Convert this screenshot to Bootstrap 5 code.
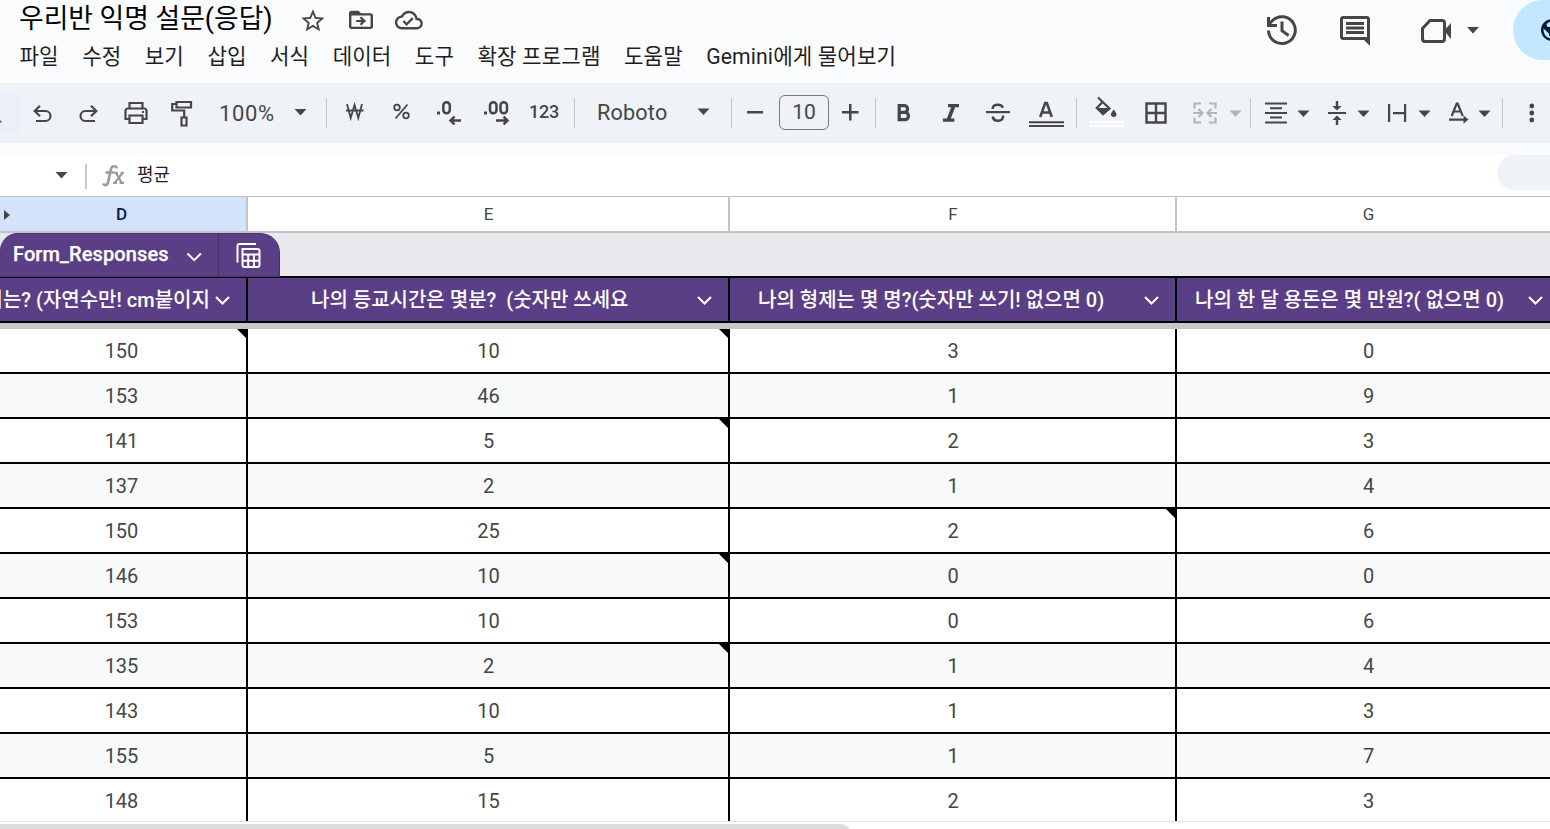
<!DOCTYPE html>
<html lang="ko">
<head>
<meta charset="utf-8">
<title>우리반 익명 설문(응답)</title>
<link rel="stylesheet" href="https://cdn.jsdelivr.net/npm/bootstrap@5.3.0/dist/css/bootstrap.min.css">
<script src="https://cdn.jsdelivr.net/npm/bootstrap@5.3.0/dist/js/bootstrap.bundle.min.js"></script>
<style>
  body{font-family:Roboto,"Noto Sans CJK KR",sans-serif;background:#f9fbfd;color:#1f1f1f;height:829px;line-height:1}
  svg{display:block;flex:none;fill:#444746}
  .ln{fill:none;stroke:#444746;stroke-width:2.2}
  .app-head{height:83px;padding-left:19px}
  .doc-title{font-size:26.8px;line-height:38px;color:#000;width:275px}
  .title-row{height:38px}
  .menus{gap:23.4px;font-size:21.2px;line-height:38px;letter-spacing:.12px;height:38px;padding-left:.5px}
  .head-tools{height:60px}
  .share-pill{width:37px;height:60px;background:#c2e7ff;border-radius:30px 0 0 30px}
  .toolbar{height:60px;background:#eff2f7;color:#444746}
  .search-chip{width:20px;height:40px;background:#ebeffa}
  .vline{width:1px;height:30px;background:#c4c7c5}
  .t-zoom{width:82px;padding-left:13px;padding-top:2px;font-size:22px;letter-spacing:.6px}
  .t-123{width:47px;padding-left:2px;padding-bottom:2px;font-size:18px;font-weight:500;letter-spacing:-.2px}
  .t-font{width:95px;padding-left:22px;font-size:21.6px;letter-spacing:.2px}
  .t-size{width:50px;height:35px;border:1px solid #747775;border-radius:6px;font-size:21px;margin-top:-2px}
  .formula{height:42px;margin-top:12px;background:#fff;border-bottom:1px solid #c0c0c0}
  .formula-text{font-size:18px;padding-left:11px;padding-bottom:1px}
  .fx-sep{width:2px;height:25px;background:#c7c7c7;margin-top:2px}
  .side-pill{width:53px;height:35px;background:#eff2f7;border-radius:18px 0 0 18px}
  .cols{display:grid;grid-template-columns:248px 482px 447px 373px}
  .cols>div{display:flex;align-items:center;justify-content:center;position:relative;overflow:hidden;white-space:nowrap}
  .cols>div:not(:last-child){border-right:2px solid #000}
  .cols>div:first-child{padding-right:3px}
  .cols>div:nth-child(2),.cols>div:nth-child(3){padding-left:1px}
  .cols>div:last-child{padding-left:10px}
  .letters{height:36px;background:#fff;border-bottom:2px solid #c4c4c4;font-size:17px;color:#444746}
  .letters>div:not(:last-child){border-color:#c4c4c4}
  .letters .picked{background:#d3e3fd;color:#041e49;font-weight:500}
  .hidden-mark{position:absolute;left:4px;top:12px}
  .band{height:43px;background:#e8e9ed}
  .tab-box{width:280px;height:44px;background:#5b3f86;border:1px solid #4a3070;border-left:0;border-radius:18px 20px 0 0;color:#fff;position:relative;z-index:1}
  .tab-name{font-size:20px;font-weight:500;-webkit-text-stroke:.25px #fff;padding-left:13px;padding-bottom:2px;width:180px;letter-spacing:.1px}
  .tab-div{width:1px;height:43px;background:#4a3070}
  .heads{height:47px;background:#5b3f86;border-top:2px solid #000;border-bottom:2px solid #000;color:#fff;font-size:20px;font-weight:500}
  .heads>div:nth-child(n){justify-content:flex-start;padding:0}
  .chev{position:absolute;top:17px;right:15px}
  .wht{fill:none;stroke:#fff;stroke-width:2}
  .frozen{height:6px;background:#c7c7c7}
  .data-row{height:45px;border-bottom:2px solid #000;background:#fff;font-size:20px;color:#444746}
  .data-row:nth-child(even){background:#f8f9fb}
  .data-row:last-child{height:42px;border-bottom:0}
  .data-row:last-child>div{padding-top:2px}
  .noted::after{content:"";position:absolute;right:0;top:0;border-top:9px solid #000;border-left:9px solid transparent}
  .scroller{height:8px;border-top:1px solid #e1e1e1;background:#fff;padding-top:2px}
  .thumb{width:851px;height:12px;background:#dadce0;border-radius:0 10px 0 0}
  .h-d span{margin-left:-15.5px}.h-e span{margin-left:63px}.h-f span{margin-left:28px}.h-g span{margin-left:18px}
</style>
</head>
<body class="overflow-hidden">
<header class="app-head d-flex justify-content-between">
  <div>
    <div class="title-row d-flex">
      <div class="doc-title text-nowrap">우리반 익명 설문(응답)</div>
      <svg width="45" height="38" viewBox="294 0 45 38"><path transform="translate(299 7) scale(1.16)" d="M22 9.24l-7.19-.62L12 2 9.19 8.63 2 9.24l5.46 4.73L5.82 21 12 17.27 18.18 21l-1.63-7.03L22 9.24zM12 15.4l-3.76 2.27 1-4.28-3.32-2.88 4.38-.38L12 6.1l1.71 4.04 4.38.38-3.32 2.88 1 4.28L12 15.4z"/></svg>
      <svg width="45" height="38" viewBox="339 0 45 38"><path transform="translate(346.6 6.3) scale(1.2 1.14)" d="M20 6h-8l-2-2H4c-1.1 0-2 .9-2 2v12c0 1.1.9 2 2 2h16c1.1 0 2-.9 2-2V8c0-1.1-.9-2-2-2zm0 12H4V8h16v10zM12.2 16.8l4-3.9-4-3.9-1.3 1.3 1.6 1.7H8v1.8h4.5l-1.6 1.7z"/></svg>
      <svg width="45" height="38" viewBox="384 0 45 38"><path transform="translate(395 6.2) scale(1.16)" d="M19.35 10.04C18.67 6.59 15.64 4 12 4 9.11 4 6.6 5.64 5.35 8.04 2.34 8.36 0 10.91 0 14c0 3.31 2.69 6 6 6h13c2.76 0 5-2.24 5-5 0-2.64-2.05-4.78-4.65-4.96zM19 18H6c-2.21 0-4-1.79-4-4 0-2.05 1.53-3.76 3.56-3.97l1.07-.11.5-.95C8.08 7.14 9.94 6 12 6c2.62 0 4.88 1.86 5.39 4.43l.3 1.5 1.53.11c1.56.1 2.78 1.41 2.78 2.96 0 1.65-1.35 3-3 3zm-9-3.82l-2.09-2.09L6.5 13.5 10 17l6.01-6.01-1.41-1.41z"/></svg>
    </div>
    <nav class="menus d-flex text-nowrap"><span>파일</span><span>수정</span><span>보기</span><span>삽입</span><span>서식</span><span>데이터</span><span>도구</span><span>확장 프로그램</span><span>도움말</span><span>Gemini에게 물어보기</span></nav>
  </div>
  <div class="head-tools d-flex">
    <svg width="68" height="60" viewBox="1250 0 68 60"><g class="ln" style="stroke-width:3"><path d="M1268.5 30.5a13.4 13.4 0 1 0 3.8-9.7l-3.6 3.7"/><path d="M1282 21.5v9.3l6.6 4.6"/></g><path d="M1267 17v10h10v-3h-7v-7z"/></svg>
    <svg width="82" height="60" viewBox="1318 0 82 60"><path transform="translate(1337 13) scale(1.5)" d="M21.99 4c0-1.1-.89-2-1.99-2H4c-1.1 0-2 .9-2 2v12c0 1.1.9 2 2 2h14l4 4-.01-18zM20 4v12H4V4h16zM6 12h12v2H6zm0-3h12v2H6zm0-3h12v2H6z"/></svg>
    <svg width="113" height="60" viewBox="1400 0 113 60"><path class="ln" style="stroke-width:3" d="M1422.5 28.5l7.5-8h12q2.5 0 2.5 2.500v15.500q0 3-2.500 3h-17q-2.500 0-2.500-3z"/><path d="M1444 30.500l7-7.500v16zM1467 27h12l-6 6.500z"/></svg>
    <div class="share-pill"><svg width="37" height="60" viewBox="1513 0 37 60" style="fill:#001d35"><path fill-rule="evenodd" d="M1552 19a11 11 0 1 0 0 22a11 11 0 0 0 0-22zM1543.400 28.500l5.600 5v1.500q0 1.500 2 1.500v2q-7.600-1-7.600-10zM1546.500 24.500q2-3 5.500-3.300v3.800h-2v2h-2.500z"/></svg></div>
  </div>
</header>

<div class="toolbar d-flex align-items-center text-nowrap overflow-hidden">
  <div class="search-chip"><svg width="20" height="40" viewBox="0 92 20 40"><path d="M0 119l2 2.500H0z"/></svg></div>
  <svg width="45" height="60" viewBox="20 83 45 60"><g class="ln"><path d="M35 111h10.500a4.700 4.700 0 0 1 0 10H36M40 105.800l-5.300 5.200 5.300 5.200"/></g></svg>
  <svg width="47" height="60" viewBox="65 83 47 60"><g class="ln"><path d="M96 111H85.500a4.700 4.700 0 0 0 0 10H95M91 105.800l5.300 5.200-5.300 5.200"/></g></svg>
  <svg width="47" height="60" viewBox="112 83 47 60"><g class="ln"><path d="M129.500 108v-5h13v5M129 119h-3.500v-8q0-2.500 2.500-2.500h16q2.500 0 2.500 2.500v8H143M129.500 115.500h13v7.500h-13z"/></g><path d="M142 111h2v2h-2z"/></svg>
  <svg width="47" height="60" viewBox="159 83 47 60"><g class="ln"><path d="M176.500 102h14.500v5.500h-14.500zM176 104h-3.800v6.500h12v7"/><path d="M181.500 117.500h5v8h-5z"/></g></svg>
  <div class="t-zoom">100%</div>
  <svg width="38" height="60" viewBox="288 83 38 60"><path d="M294.500 109h12l-6 6.500z"/></svg>
  <div class="vline"></div>
  <svg width="56" height="60" viewBox="327 83 56 60"><g class="ln" style="stroke-width:1.800"><path d="M347 104l3.700 14 3.800-13 3.800 13 3.700-14M346 110.500h17.500"/></g></svg>
  <svg width="42" height="60" viewBox="383 83 42 60"><g class="ln" style="stroke-width:1.800"><circle cx="397" cy="107.500" r="2.800"/><circle cx="406" cy="115.500" r="2.800"/><path d="M407.500 104.500l-12 14"/></g></svg>
  <svg width="47" height="60" viewBox="425 83 47 60"><path d="M437 111.500h3v3h-3z"/><g class="ln" style="stroke-width:2.500"><rect x="443.300" y="102.300" width="6.500" height="11" rx="3.200"/><path d="M461 120.500h-10M454.500 116.700l-4 3.800 4 3.800"/></g></svg>
  <svg width="55" height="60" viewBox="472 83 55 60"><path d="M484 111.500h3v3h-3z"/><g class="ln" style="stroke-width:2.500"><rect x="490" y="102.300" width="6.500" height="11" rx="3.200"/><rect x="500.500" y="102.300" width="6.500" height="11" rx="3.200"/><path d="M496 120.500h11M503.500 116.700l4 3.800-4 3.800"/></g></svg>
  <div class="t-123">123</div>
  <div class="vline"></div>
  <div class="t-font">Roboto</div>
  <svg width="61" height="60" viewBox="670 83 61 60"><path d="M697.500 108.500h12l-6 6.500z"/></svg>
  <div class="vline"></div>
  <svg width="47" height="60" viewBox="732 83 47 60"><path d="M747 111h16v2.500h-16z"/></svg>
  <div class="t-size d-flex align-items-center justify-content-center">10</div>
  <svg width="46" height="60" viewBox="829 83 46 60"><path d="M842 111h7v-7h2.500v7h7v2.500h-7v7H849v-7h-7z"/></svg>
  <div class="vline"></div>
  <svg width="52" height="60" viewBox="876 83 52 60"><path class="ln" style="stroke-width:3.200" d="M899.200 105.600h5a3.300 3.300 0 0 1 0 6.800h-5zM899.200 112.400h5.700a3.500 3.500 0 0 1 0 7.200h-5.700z"/></svg>
  <svg width="46" height="60" viewBox="928 83 46 60"><path d="M948 104h11v3.200h-3.800l-4.400 11.300h3.600v3.200h-11.500v-3.200h4l4.300-11.300H948z"/></svg>
  <svg width="48" height="60" viewBox="974 83 48 60"><path d="M986 111h24v2.200h-24z"/><g class="ln" style="stroke-width:2.500"><path d="M992.700 109q-.2-4.200 5.300-4.200 4 0 4.800 3M992.700 116.500q.5 4.200 5.300 4.200 5.500 0 5-5.200"/></g></svg>
  <svg width="54" height="60" viewBox="1022 83 54 60"><path class="ln" style="stroke-width:2.500" d="M1040.200 117l5-14h1.600l5 14M1042 112.500h8"/><path d="M1029 121.300h35v2h-35zM1029 125h35v2h-35z"/></svg>
  <div class="vline"></div>
  <svg width="54" height="60" viewBox="1077 83 54 60"><path class="ln" d="M1098 97.500l11.500 11-6.200 5.500-6.500-6 6-6.200"/><path d="M1096 108h14l-7 7.500zM1113.700 109.500q2.800 3.200 2.800 4.800a2.800 2.800 0 0 1-5.600 0q0-1.600 2.800-4.800z"/><path fill="#fff" d="M1089 121.300h35v2h-35zM1089 125h35v2h-35z"/></svg>
  <svg width="50" height="60" viewBox="1131 83 50 60"><path class="ln" style="stroke-width:2.400" d="M1146.500 103.500h19v19h-19zM1156 103.500v19M1146.500 113h19"/></svg>
  <svg width="69" height="60" viewBox="1181 83 69 60"><g class="ln" style="stroke:#b3b6b8"><path d="M1201 103.500h-6.500v5M1201 122.500h-6.500v-5M1209 103.500h6.500v5M1209 122.500h6.500v-5M1193 113h8.500M1198.500 109l4 4-4 4M1217 113h-8.500M1211.500 109l-4 4 4 4"/></g><path fill="#b3b6b8" d="M1229.500 110.500h12l-6 6.500z"/></svg>
  <div class="vline"></div>
  <svg width="66" height="60" viewBox="1251 83 66 60"><path d="M1265 102.500h22v2h-22zM1270 107.200h12v2h-12zM1265 112h22v2h-22zM1270 116.600h12v2h-12zM1265 121.500h22v2h-22zM1297.500 110.500h12l-6 6.500z"/></svg>
  <svg width="60" height="60" viewBox="1317 83 60 60"><path d="M1328 112h18v2h-18zM1335.800 101h2.400v5h3.400l-4.600 4.500-4.600-4.500h3.400zM1335.800 125h2.400v-5h3.400l-4.600-4.500-4.600 4.500h3.400zM1357.500 110.500h12l-6 6.500z"/></svg>
  <svg width="61" height="60" viewBox="1377 83 61 60"><path d="M1388 104h2.200v18h-2.200zM1404 104h2.200v18h-2.200zM1393 112h11v2.200h-11zM1418.500 110.500h12l-6 6.500z"/></svg>
  <svg width="64" height="60" viewBox="1438 83 64 60"><path class="ln" d="M1451.700 116l5-12.500h1l5 12.500M1453.500 111.500h7.500"/><path d="M1449 118.500h14.500v-3l5 4.100-5 4.100v-3H1449zM1478.500 110.500h12l-6 6.500z"/></svg>
  <div class="vline"></div>
  <svg width="47" height="60" viewBox="1503 83 47 60"><circle cx="1531.800" cy="106" r="2.400"/><circle cx="1531.800" cy="113" r="2.400"/><circle cx="1531.800" cy="120" r="2.400"/></svg>
</div>

<div class="formula d-flex justify-content-between">
  <div class="d-flex align-items-center">
    <svg width="85" height="41" viewBox="0 155 85 41"><path d="M55.500 172h12l-6 6.500z"/></svg>
    <div class="fx-sep"></div>
    <svg width="39" height="41" viewBox="87 155 39 41"><g fill="none" stroke="#999c9e" stroke-width="2.200"><path d="M103 183.500q1 2 3 1.500 1.700-.5 2.300-3.500l2.200-11q.8-4.300 4-4.200 2 0 2.200 2M105.500 172.500h9" stroke-width="2.600"/><path d="M114.500 172.800h3.500M120.500 172.800h3.500M113 182.800h4M119.500 182.800h4.500M116 173l5.800 9.700M122.500 173l-7.500 9.700"/></g></svg>
    <div class="formula-text">평균</div>
  </div>
  <div class="side-pill"></div>
</div>

<div class="cols letters"><div class="picked"><svg class="hidden-mark" width="6" height="12" viewBox="0 0 6 12"><path d="M0 1l6 5-6 5z"/></svg>D</div><div>E</div><div>F</div><div>G</div></div>

<div class="band">
  <div class="tab-box d-flex align-items-center">
    <div class="tab-name">Form_Responses</div>
    <svg width="38" height="42" viewBox="180 234 38 42"><path class="wht" d="M187.500 253.500l6.700 6.700 6.700-6.700"/></svg>
    <div class="tab-div"></div>
    <svg width="60" height="42" viewBox="219 234 60 42"><g class="wht"><path d="M237.500 262.500V246q0-2 2-2H256M242.500 249h15q2 0 2 2v14q0 2-2 2h-13q-2 0-2-2zM242 254.500h18M242 260.800h18M248.200 254.500V267M254 254.500V267"/></g></svg>
  </div>
</div>

<div class="cols heads">
  <div class="h-d"><span>키는? (자연수만! cm붙이지</span><svg class="chev" width="17" height="12" viewBox="0 0 17 12"><path class="wht" d="M2 2l6.500 6.500L15 2"/></svg></div>
  <div class="h-e"><span>나의 등교시간은 몇분?&nbsp; (숫자만 쓰세요</span><svg class="chev" width="17" height="12" viewBox="0 0 17 12"><path class="wht" d="M2 2l6.500 6.500L15 2"/></svg></div>
  <div class="h-f"><span>나의 형제는 몇 명?(숫자만 쓰기! 없으면 0)</span><svg class="chev" width="17" height="12" viewBox="0 0 17 12"><path class="wht" d="M2 2l6.500 6.500L15 2"/></svg></div>
  <div class="h-g"><span>나의 한 달 용돈은 몇 만원?( 없으면 0)</span><svg class="chev" style="right:6px" width="17" height="12" viewBox="0 0 17 12"><path class="wht" d="M2 2l6.500 6.500L15 2"/></svg></div>
</div>
<div class="frozen"></div>
<main id="rows"></main>
<div class="scroller"><div class="thumb"></div></div>

<script>
  // An asterisk marks a cell that carries a note
  const answers = [
    ['150*','10*','3','0'], ['153','46','1','9'], ['141','5*','2','3'], ['137','2','1','4'],
    ['150','25','2*','6'], ['146','10*','0','0'], ['153','10','0','6'], ['135','2*','1','4'],
    ['143','10','1','3'], ['155','5','1','7'], ['148','15','2','3']
  ];
  document.getElementById('rows').innerHTML = answers.map(r =>
    '<div class="cols data-row">' + r.map(v =>
      `<div class="${v.endsWith('*') ? 'noted' : ''}">${v.replace('*', '')}</div>`).join('') + '</div>').join('');
</script>
</body>
</html>
